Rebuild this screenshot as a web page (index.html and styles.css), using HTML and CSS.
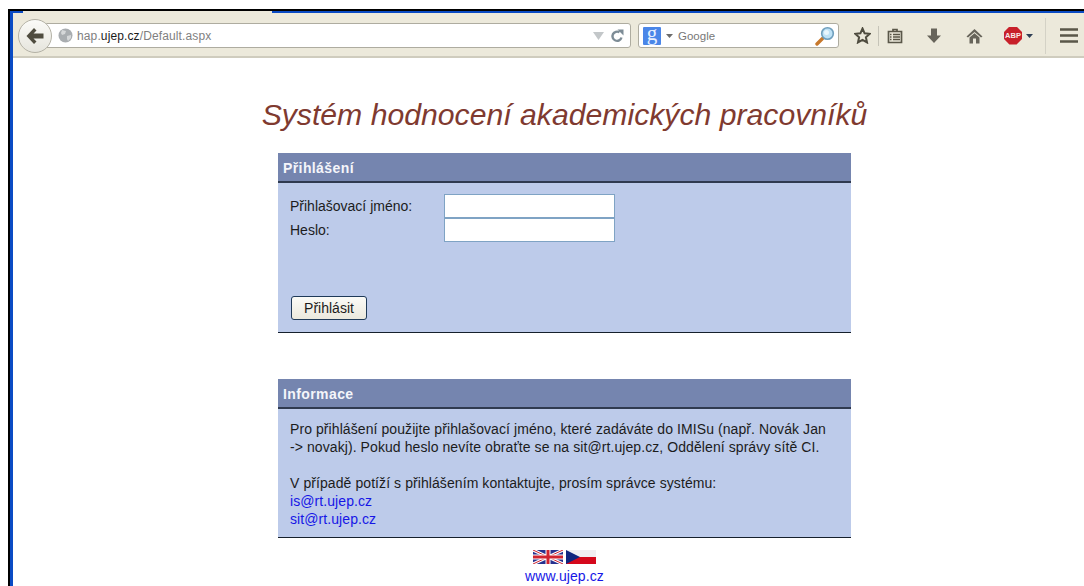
FILE: index.html
```html
<!DOCTYPE html>
<html lang="cs">
<head>
<meta charset="utf-8">
<title>Systém hodnocení akademických pracovníků</title>
<link rel="stylesheet" href="styles.css">
</head>
<body>
<div class="window">
  <div class="tabstrip"><span class="tab"></span></div>
  <header class="toolbar">
    <button class="back" aria-label="Zpět">
      <svg width="20" height="18" viewBox="0 0 20 18"><path d="M9 1 1.500 9 9 17 11.500 14.500 8.500 11.500H18.500V6.500H8.500L11.500 3.500z" fill="#4f4c3f"/></svg>
    </button>
    <div class="urlbar">
      <svg class="globe" width="15" height="15" viewBox="0 0 15 15"><circle cx="7.500" cy="7.500" r="7" fill="#a9adb0"/><path d="M4 2 8 3 7 6 4 7 3 5zM9 8l4-1 0 3-3 3-1-2z" fill="#d5d7d8"/></svg>
      <span class="url">hap.<b>ujep.cz</b>/Default.aspx</span>
      <svg class="drop" width="11" height="8" viewBox="0 0 11 8"><path d="M0 0h11L5.500 8z" fill="#c3c7c9"/></svg>
      <svg class="reload" width="14" height="14" viewBox="0 0 14 14"><path d="M11.500 8.500A4.600 4.600 0 1 1 9.500 3.300" fill="none" stroke="#7d8c96" stroke-width="2.400"/><path d="M7.500 0.500 13.500 0.500 13.500 6.500z" fill="#7d8c96"/></svg>
    </div>
    <div class="searchbar">
      <span class="gicon">g</span>
      <svg width="7" height="4" viewBox="0 0 7 4"><path d="M0 0h7L3.500 4z" fill="#6b6b6b"/></svg>
      <span class="engine">Google</span>
      <svg class="lens" width="20" height="20" viewBox="0 0 20 20"><path d="M2 18 7.500 12.500" stroke="#c7782c" stroke-width="3.400" stroke-linecap="round"/><circle cx="12.500" cy="7.500" r="5.800" fill="#bfe2f6" stroke="#6f9fbd" stroke-width="1.600"/><circle cx="11.500" cy="6.500" r="2.500" fill="#e8f6fd"/></svg>
    </div>
    <div class="tools">
      <svg class="tool-star" width="17" height="17" viewBox="0 0 17 17"><path d="M8.500 1.500 10.600 6.300 15.800 6.800 11.900 10.300 13 15.400 8.500 12.800 4 15.400 5.100 10.300 1.200 6.800 6.400 6.300z" fill="none" stroke="#4f4c3f" stroke-width="2"/></svg>
      <span class="sep"></span>
      <svg class="tool-list" width="16" height="16" viewBox="0 0 16 16"><path d="M1.500 3.500h13v11h-13zM6 3.500V1.500h4v2M6 6.500h7M6 9h7M6 11.500h7M3 6.500h1.500M3 9h1.500M3 11.500h1.500" fill="none" stroke="#5a5749" stroke-width="1.700"/></svg>
      <svg class="tool-down" width="16" height="16" viewBox="0 0 16 16"><path d="M5 0.500h6v7h4L8 15 1 7.500h4z" fill="#67645a"/></svg>
      <svg class="tool-home" width="17" height="16" viewBox="0 0 17 16"><path d="M8.500 1 0.500 8.500 2 9.500 8.500 4 15 9.500 16.500 8.500z" fill="#67645a"/><path d="M3.500 9.500 8.500 5.200 13.500 9.500V15.500H10V10.500H7V15.500H3.500z" fill="#67645a"/></svg>
      <span class="abp"><span class="abp-badge">ABP</span><svg width="7" height="4" viewBox="0 0 7 4"><path d="M0 0h7L3.500 4z" fill="#2f3f55"/></svg></span>
      <span class="sep sep-tall"></span>
      <svg class="tool-menu" width="18" height="15" viewBox="0 0 18 15"><path d="M0.500 1.500h17M0.500 7.500h17M0.500 13.500h17" stroke="#5a5749" stroke-width="2.600" stroke-linecap="round"/></svg>
    </div>
  </header>

  <main class="page">
    <h1 class="title">Systém hodnocení akademických pracovníků</h1>

    <section class="panel panel-login">
      <h2 class="panel-head">Přihlášení</h2>
      <form class="panel-body login-body">
        <div class="field-grid">
          <label class="field-label" for="jmeno">Přihlašovací jméno:</label>
          <input class="field" id="jmeno" type="text">
          <label class="field-label" for="heslo">Heslo:</label>
          <input class="field" id="heslo" type="password">
        </div>
        <button class="submit" type="button">Přihlásit</button>
      </form>
    </section>

    <section class="panel panel-info">
      <h2 class="panel-head">Informace</h2>
      <div class="panel-body info-body">
        <p class="info-text">Pro přihlášení použijte přihlašovací jméno, které zadáváte do IMISu (např. Novák Jan<br>-&gt; novakj). Pokud heslo nevíte obraťte se na sit@rt.ujep.cz, Oddělení správy sítě CI.</p>
        <p class="info-text">V případě potíží s přihlášením kontaktujte, prosím správce systému:<br><a href="#">is@rt.ujep.cz</a><br><a href="#">sit@rt.ujep.cz</a></p>
      </div>
    </section>

    <div class="flags">
      <svg width="30" height="14" viewBox="0 0 30 14"><rect width="30" height="14" fill="#27318f"/><path d="M0 0 30 14M30 0 0 14" stroke="#fff" stroke-width="3"/><path d="M0 0 30 14M30 0 0 14" stroke="#d0232f" stroke-width="1"/><path d="M15 0V14M0 7H30" stroke="#fff" stroke-width="5"/><path d="M15 0V14M0 7H30" stroke="#d0232f" stroke-width="3"/></svg>
      <svg width="30" height="14" viewBox="0 0 30 14"><rect width="30" height="7" fill="#f1eff2"/><rect y="7" width="30" height="7" fill="#d5081c"/><path d="M0 0 14 7 0 14z" fill="#10257f"/></svg>
    </div>
    <a class="home-link" href="#">www.ujep.cz</a>
  </main>
</div>
</body>
</html>
```
FILE: styles.css
```css
* { box-sizing: border-box; }

html, body {
  margin: 0;
  height: 586px;
  overflow: hidden;
  background: #fff;
}

body {
  padding: 9px 0 0 8px;
  font-family: "Liberation Sans", Arial, sans-serif;
  font-size: 13px;
  color: #1a1a1a;
}

.window {
  height: 577px;
  border-left: 2px solid #000;
  border-top: 2px solid #000;
  display: flex;
  flex-direction: column;
  background: #fff;
  box-shadow: inset 3px 2px 0 #0a4bc4;
  padding-left: 3px;
}

/* Browser chrome */
.tabstrip {
  height: 2px;
  flex: none;
}

.tab {
  display: block;
  width: 249px;
  height: 2px;
  margin-left: 10px;
  background: #ece9db;
}

.toolbar {
  height: 45px;
  flex: none;
  background: #ece9db;
  border-bottom: 2px solid #cfccbe;
  display: flex;
  align-items: center;
  padding: 2px 0 0 5px;
}

.back {
  width: 34px;
  height: 34px;
  flex: none;
  border-radius: 50%;
  border: 1px solid #b4b2a6;
  background: linear-gradient(#fbfbf8, #e6e5dd);
  display: flex;
  align-items: center;
  justify-content: center;
  padding: 0;
  position: relative;
  z-index: 1;
}

.urlbar {
  width: 585px;
  height: 25px;
  margin-left: -6px;
  padding: 0 6px 0 11px;
  background: #fff;
  border: 1px solid #aeaca0;
  border-radius: 0 3px 3px 0;
  display: flex;
  align-items: center;
  flex: none;
}

.globe { flex: none; }

.url {
  margin-left: 4px;
  font-size: 12px;
  letter-spacing: 0.120px;
  color: #7f7f7f;
  flex: 1;
}

.url b { font-weight: normal; color: #1b1b1b; }

.reload { margin-left: 6px; }

.searchbar {
  width: 201px;
  height: 25px;
  margin-left: 7px;
  padding: 0 3px 0 4px;
  background: #fff;
  border: 1px solid #aeaca0;
  border-radius: 3px;
  display: flex;
  align-items: center;
  gap: 5px;
  flex: none;
}

.gicon {
  width: 18px;
  height: 18px;
  background: #4a86e8;
  color: #e8f0ff;
  font-family: "Liberation Serif", serif;
  font-size: 21px;
  line-height: 13px;
  text-align: center;
  border-radius: 1px;
}

.engine {
  font-size: 11.500px;
  color: #777;
  flex: 1;
}

.tools {
  display: flex;
  align-items: center;
  flex: 1;
  margin-left: 15px;
  height: 36px;
}

.sep { width: 1px; height: 20px; background: #c6c4b8; margin: 0 8px 0 7px; }
.sep-tall { height: 36px; margin: 0 14px 0 12px; background: #d4d2c6; }

.tool-down { margin-left: 23px; }
.tool-home { margin-left: 24px; }

.abp {
  margin-left: 21px;
  display: flex;
  align-items: center;
  gap: 4px;
}

.abp-badge {
  width: 18px;
  height: 18px;
  background: #c8202a;
  color: #f8e8e8;
  clip-path: polygon(30% 0, 70% 0, 100% 30%, 100% 70%, 70% 100%, 30% 100%, 0 70%, 0 30%);
  font-size: 7.500px;
  font-weight: bold;
  line-height: 18px;
  text-align: center;
}

/* Page content */
.page {
  flex: 1;
  display: flex;
  flex-direction: column;
  align-items: center;
  padding-left: 32px;
}

.title {
  margin: 40px 0 0;
  height: 36px;
  font-size: 30.200px;
  font-weight: normal;
  font-style: italic;
  line-height: 34px;
  color: #7f3a30;
  white-space: nowrap;
}

.panel {
  width: 573px;
  background: #bdcbea;
  border-bottom: 1px solid #16202c;
}

.panel-login { margin-top: 19px; height: 180px; }
.panel-info { margin-top: 46px; height: 159px; }

.panel-head {
  margin: 0;
  height: 30px;
  padding-left: 5px;
  background: #7585af;
  border-bottom: 2px solid #2f3a50;
  color: #f4f5fa;
  font-size: 14px;
  font-weight: bold;
  line-height: 30px;
  letter-spacing: 0.400px;
}

.panel-body { padding-left: 12px; }

.login-body { padding-top: 11px; }

.field-grid {
  display: grid;
  grid-template-columns: 154px 171px;
  align-items: center;
}

.field-label { font-size: 14px; color: #1c1c1c; }

.field {
  width: 171px;
  height: 24px;
  border: 1px solid #7fa3c4;
  background: #fff;
  padding: 0;
  display: block;
}

.submit {
  display: block;
  margin: 54px 0 0 1px;
  width: 76px;
  height: 24px;
  padding: 0;
  border: 1px solid #1f3a58;
  border-radius: 3px;
  background: linear-gradient(#fbfbf7, #ebe9dd);
  font-family: inherit;
  font-size: 14px;
  color: #1c1c1c;
}

.info-body { padding-top: 11px; }

.info-text {
  margin: 0 0 18px;
  font-size: 14px;
  line-height: 18px;
  letter-spacing: 0.080px;
  color: #1c1c1c;
  white-space: nowrap;
}

a { color: #1616e6; text-decoration: none; }

.flags {
  margin-top: 12px;
  display: flex;
  gap: 3px;
  height: 14px;
}

.flags svg { display: block; }

.home-link {
  margin-top: 4px;
  font-size: 14px;
  letter-spacing: 0.100px;
  line-height: 16px;
}
```
